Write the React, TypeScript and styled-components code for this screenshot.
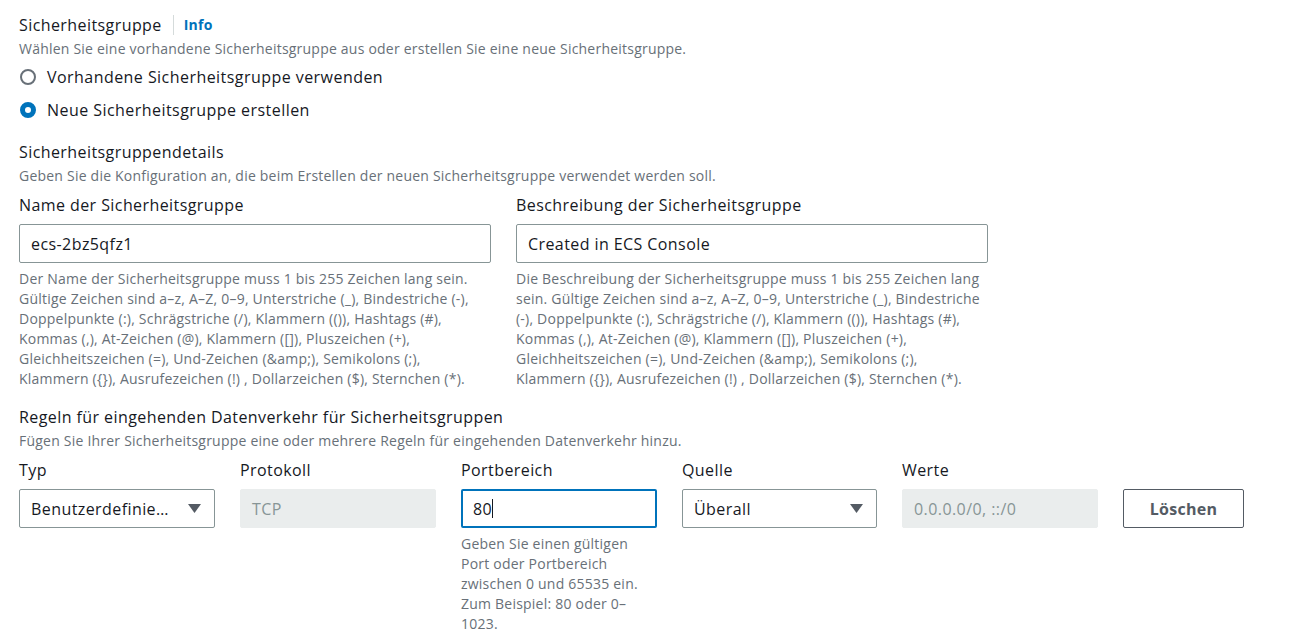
import React from "react";
import styled, { createGlobalStyle } from "styled-components";

const GlobalStyle = createGlobalStyle`
  html, body { margin: 0; padding: 0; background: #ffffff; }
  body { font-family: "Open Sans", "Noto Sans", sans-serif; color: #16191f; letter-spacing: 0.22px; }
  * { box-sizing: border-box; }
`;

const Page = styled.div`
  padding: 14px 19px 0 19px;
  display: flex;
  flex-direction: column;
`;

const Section = styled.section<{ $mt?: number }>`
  display: flex;
  flex-direction: column;
  margin-top: ${(p) => p.$mt ?? 0}px;
`;

const HeadingRow = styled.div`
  display: flex;
  align-items: center;
  height: 22px;
`;

const Heading = styled.h2`
  margin: 0;
  font-size: 16px;
  font-weight: 400;
  line-height: 22px;
  letter-spacing: 0.42px;
  color: #16191f;
`;

const InfoLink = styled.a`
  margin-left: 11px;
  padding-left: 10px;
  border-left: 1px solid #d5dbdb;
  font-size: 14px;
  font-weight: 700;
  line-height: 20px;
  color: #0073bb;
  text-decoration: none;
`;

const Description = styled.p`
  margin: 3px 0 0 0;
  font-size: 14px;
  line-height: 20px;
  color: #687078;
`;

const RadioGroup = styled.div`
  display: flex;
  flex-direction: column;
  gap: 11px;
  margin-top: 7px;
`;

const RadioRow = styled.label`
  display: flex;
  align-items: center;
  height: 22px;
  font-size: 16px;
  line-height: 22px;
  letter-spacing: 0.45px;
  color: #16191f;
`;

const RadioDot = styled.span<{ $checked?: boolean }>`
  width: 16px;
  height: 16px;
  border-radius: 50%;
  margin-left: 1px;
  margin-right: 11px;
  background: #ffffff;
  border: ${(p) => (p.$checked ? "5px solid #0073bb" : "2px solid #687078")};
  flex: none;
`;

const FieldGrid = styled.div`
  display: grid;
  grid-template-columns: 472px 472px;
  column-gap: 25px;
  margin-top: 8px;
`;

const Field = styled.div`
  display: flex;
  flex-direction: column;
`;

const Label = styled.label`
  font-size: 16px;
  line-height: 22px;
  letter-spacing: 0.42px;
  color: #16191f;
`;

const TextBox = styled.div`
  margin-top: 8px;
  height: 39px;
  border: 1px solid #879596;
  border-radius: 2px;
  padding: 0 11px;
  display: flex;
  align-items: center;
  font-size: 16px;
  letter-spacing: 0.42px;
  color: #16191f;
  background: #ffffff;
`;

const Help = styled.p`
  margin: 6px 0 0 0;
  font-size: 14px;
  line-height: 20px;
  color: #687078;
`;

const RulesGrid = styled.div`
  display: grid;
  grid-template-columns: 196px 196px 196px 195px 196px 121px;
  column-gap: 25px;
  margin-top: 8px;
  align-items: start;
`;

const Control = styled.div<{ $variant?: "select" | "disabled" | "focus" }>`
  margin-top: 8px;
  height: 39px;
  border-radius: 2px;
  display: flex;
  align-items: center;
  font-size: 16px;
  letter-spacing: 0.42px;
  padding: 0 11px;
  ${(p) =>
    p.$variant === "disabled"
      ? `background: #eaeded; border: 1px solid #eaeded; color: #879596;`
      : p.$variant === "focus"
      ? `background: #ffffff; border: 2px solid #0073bb; padding: 0 10px; color: #16191f;`
      : `background: #ffffff; border: 1px solid #879596; color: #16191f;`}
`;

const SelectText = styled.span`
  flex: 1;
  min-width: 0;
  white-space: nowrap;
  overflow: hidden;
  text-overflow: ellipsis;
`;

const Caret = styled.span`
  display: inline-block;
  width: 1px;
  height: 19px;
  background: #16191f;
`;

const Arrow = styled.svg`
  width: 13px;
  height: 9px;
  margin-left: 16px;
  margin-right: 2px;
  flex: none;
`;

const DeleteButton = styled.button`
  margin-top: 30px;
  height: 39px;
  width: 121px;
  border: 1px solid #545b64;
  border-radius: 2px;
  background: #ffffff;
  color: #545b64;
  font-family: inherit;
  font-size: 16px;
  font-weight: 700;
  letter-spacing: 0.3px;
  padding: 0;
`;

const ChevronDown = () => (
  <Arrow viewBox="0 0 13 9">
    <polygon points="0,0 13,0 6.5,9" fill="#545b64" />
  </Arrow>
);

export default function App() {
  return (
    <>
      <GlobalStyle />
      <Page>
        <Section>
          <HeadingRow>
            <Heading>Sicherheitsgruppe</Heading>
            <InfoLink href="#">Info</InfoLink>
          </HeadingRow>
          <Description>
            Wählen Sie eine vorhandene Sicherheitsgruppe aus oder erstellen Sie eine neue Sicherheitsgruppe.
          </Description>
          <RadioGroup>
            <RadioRow>
              <RadioDot />
              Vorhandene Sicherheitsgruppe verwenden
            </RadioRow>
            <RadioRow>
              <RadioDot $checked />
              Neue Sicherheitsgruppe erstellen
            </RadioRow>
          </RadioGroup>
        </Section>

        <Section $mt={20}>
          <Heading>Sicherheitsgruppendetails</Heading>
          <Description>
            Geben Sie die Konfiguration an, die beim Erstellen der neuen Sicherheitsgruppe verwendet werden soll.
          </Description>
          <FieldGrid>
            <Field>
              <Label>Name der Sicherheitsgruppe</Label>
              <TextBox>ecs-2bz5qfz1</TextBox>
              <Help>
                Der Name der Sicherheitsgruppe muss 1 bis 255 Zeichen lang sein. Gültige Zeichen sind a–z, A–Z, 0–9,
                Unterstriche (_), Bindestriche (-), Doppelpunkte (:), Schrägstriche (/), Klammern (()), Hashtags (#),
                Kommas (,), At-Zeichen (@), Klammern ([]), Pluszeichen (+), Gleichheitszeichen (=), Und-Zeichen
                (&amp;amp;), Semikolons (;), Klammern ({"{}"}), Ausrufezeichen (!) , Dollarzeichen ($), Sternchen (*).
              </Help>
            </Field>
            <Field>
              <Label>Beschreibung der Sicherheitsgruppe</Label>
              <TextBox>Created in ECS Console</TextBox>
              <Help>
                Die Beschreibung der Sicherheitsgruppe muss 1 bis 255 Zeichen lang sein. Gültige Zeichen sind a–z,
                A–Z, 0–9, Unterstriche (_), Bindestriche (-), Doppelpunkte (:), Schrägstriche (/), Klammern (()),
                Hashtags (#), Kommas (,), At-Zeichen (@), Klammern ([]), Pluszeichen (+), Gleichheitszeichen (=),
                Und-Zeichen (&amp;amp;), Semikolons (;), Klammern ({"{}"}), Ausrufezeichen (!) , Dollarzeichen ($),
                Sternchen (*).
              </Help>
            </Field>
          </FieldGrid>
        </Section>

        <Section $mt={17}>
          <Heading>Regeln für eingehenden Datenverkehr für Sicherheitsgruppen</Heading>
          <Description>
            Fügen Sie Ihrer Sicherheitsgruppe eine oder mehrere Regeln für eingehenden Datenverkehr hinzu.
          </Description>
          <RulesGrid>
            <Field>
              <Label>Typ</Label>
              <Control $variant="select">
                <SelectText>Benutzerdefiniertes TCP</SelectText>
                <ChevronDown />
              </Control>
            </Field>
            <Field>
              <Label>Protokoll</Label>
              <Control $variant="disabled">TCP</Control>
            </Field>
            <Field>
              <Label>Portbereich</Label>
              <Control $variant="focus">
                80
                <Caret />
              </Control>
              <Help>
                Geben Sie einen gültigen Port oder Portbereich zwischen 0 und 65535 ein. Zum Beispiel: 80 oder 0–1023.
              </Help>
            </Field>
            <Field>
              <Label>Quelle</Label>
              <Control $variant="select">
                <SelectText>Überall</SelectText>
                <ChevronDown />
              </Control>
            </Field>
            <Field>
              <Label>Werte</Label>
              <Control $variant="disabled">0.0.0.0/0, ::/0</Control>
            </Field>
            <DeleteButton>Löschen</DeleteButton>
          </RulesGrid>
        </Section>
      </Page>
    </>
  );
}
